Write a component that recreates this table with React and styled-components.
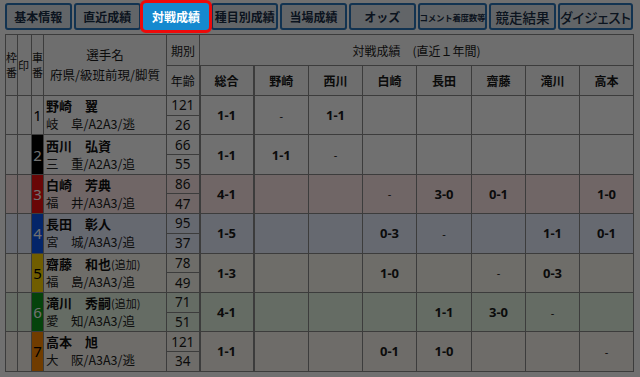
import React from 'react'
import styled, { createGlobalStyle } from 'styled-components'

const GlobalStyle = createGlobalStyle`
    html, body {
        margin: 0;
        padding: 0;
        background: #fff;
    }
    body {
        font-family: 'Noto Sans CJK JP', 'Noto Sans', sans-serif;
        color: #111;
    }
`

const tabs = [
    { label: '基本情報' },
    { label: '直近成績' },
    { label: '対戦成績', active: true },
    { label: '種目別成績' },
    { label: '当場成績' },
    { label: 'オッズ' },
    { label: 'コメント着度数等', size: 'small' },
    { label: '競走結果', size: 'large' },
    { label: 'ダイジェスト', size: 'large' },
]

const opponents = ['野崎', '西川', '白崎', '長田', '齋藤', '滝川', '高本']

const carColors = {
    1: { bg: '#ffffff', fg: '#000' },
    2: { bg: '#000000', fg: '#fff' },
    3: { bg: '#f01010', fg: '#fff' },
    4: { bg: '#0a55f0', fg: '#fff' },
    5: { bg: '#ffd400', fg: '#000' },
    6: { bg: '#0c9a1c', fg: '#fff' },
    7: { bg: '#ff8a00', fg: '#000' },
}

const rowTints = {
    1: '#ffffff',
    2: '#ffffff',
    3: '#ffe9e9',
    4: '#e9eeff',
    5: '#fbf8ee',
    6: '#e6f6e3',
    7: '#fbf6ee',
}

const players = [
    { car: 1, name: '野崎　翼', sub: '岐　阜/A2A3/逃', term: 121, age: 26, total: '1-1', res: ['-', '1-1', '', '', '', '', ''] },
    { car: 2, name: '西川　弘資', sub: '三　重/A2A3/追', term: 66, age: 55, total: '1-1', res: ['1-1', '-', '', '', '', '', ''] },
    { car: 3, name: '白崎　芳典', sub: '福　井/A3A3/追', term: 86, age: 47, total: '4-1', res: ['', '', '-', '3-0', '0-1', '', '1-0'] },
    { car: 4, name: '長田　彰人', sub: '宮　城/A3A3/追', term: 95, age: 37, total: '1-5', res: ['', '', '0-3', '-', '', '1-1', '0-1'] },
    { car: 5, name: '齋藤　和也', extra: '(追加)', sub: '福　島/A3A3/追', term: 78, age: 49, total: '1-3', res: ['', '', '1-0', '', '-', '0-3', ''] },
    { car: 6, name: '滝川　秀嗣', extra: '(追加)', sub: '愛　知/A3A3/追', term: 71, age: 51, total: '4-1', res: ['', '', '', '1-1', '3-0', '-', ''] },
    { car: 7, name: '高本　旭', sub: '大　阪/A3A3/逃', term: 121, age: 34, total: '1-1', res: ['', '', '0-1', '1-0', '', '', '-'] },
]

const colWidths = [12, 14, 12, 123, 33, 54, 55, 54, 54, 55, 54, 54, 54]

const App = () => {
    return (
        <Page>
            <GlobalStyle />
            <TabBar>
                {tabs.map(tab => (
                    <Tab key={tab.label} $active={tab.active} $size={tab.size}>
                        {tab.label}
                    </Tab>
                ))}
            </TabBar>

            <Table>
                <colgroup>
                    {colWidths.map((w, i) => (
                        <col key={i} style={{ width: w }} />
                    ))}
                </colgroup>
                <thead>
                    <HeadRow $h={31}>
                        <StackHead rowSpan={2}>枠<br />番</StackHead>
                        <StackHead rowSpan={2}>印</StackHead>
                        <StackHead rowSpan={2}>車<br />番</StackHead>
                        <NameHead rowSpan={2}>
                            選手名
                            <br />
                            府県/級班前現/脚質
                        </NameHead>
                        <HeadCell>期別</HeadCell>
                        <HeadCell colSpan={8}>対戦成績　(直近１年間)</HeadCell>
                    </HeadRow>
                    <HeadRow $h={30}>
                        <HeadCell>年齢</HeadCell>
                        <HeadCell $bold $thick>総合</HeadCell>
                        {opponents.map(o => (
                            <HeadCell key={o} $bold>{o}</HeadCell>
                        ))}
                    </HeadRow>
                </thead>
                <tbody>
                    {players.map(p => (
                        <React.Fragment key={p.car}>
                            <DataRow $tint={rowTints[p.car]}>
                                <Cell rowSpan={2} />
                                <Cell rowSpan={2} />
                                <CarCell rowSpan={2} $bg={carColors[p.car].bg} $fg={carColors[p.car].fg}>
                                    {p.car}
                                </CarCell>
                                <NameCell rowSpan={2}>
                                    <PlayerName>
                                        {p.name}
                                        {p.extra && <Extra>{p.extra}</Extra>}
                                    </PlayerName>
                                    <PlayerSub>{p.sub}</PlayerSub>
                                </NameCell>
                                <NumCell>{p.term}</NumCell>
                                <ResultCell rowSpan={2} $thick>{p.total}</ResultCell>
                                {p.res.map((r, i) => (
                                    <ResultCell key={i} rowSpan={2} $dash={r === '-'}>
                                        {r}
                                    </ResultCell>
                                ))}
                            </DataRow>
                            <DataRow $tint={rowTints[p.car]}>
                                <NumCell>{p.age}</NumCell>
                            </DataRow>
                        </React.Fragment>
                    ))}
                </tbody>
            </Table>

            <Dimmer />
        </Page>
    )
}

const Page = styled.div`
    padding: 3px 7px 0 5px;
    width: 628px;
`

const TabBar = styled.nav`
    display: grid;
    grid-template-columns: repeat(9, 1fr);
    gap: 2px;
    height: 27px;
`

const Tab = styled.div`
    position: relative;
    z-index: ${p => (p.$active ? 20 : 'auto')};
    display: flex;
    align-items: center;
    justify-content: center;
    white-space: nowrap;
    border: 2px solid ${p => (p.$active ? '#1589cf' : '#2a74b8')};
    border-radius: 3px;
    background: ${p => (p.$active ? '#1589cf' : '#dfe7ec')};
    color: ${p => (p.$active ? '#fff' : '#1b2f48')};
    outline: ${p => (p.$active ? '3px solid #ee0a0a' : 'none')};
    font-weight: ${p => (p.$size === 'large' ? 500 : 700)};
    font-size: ${p => (p.$size === 'small' ? '8.5px' : p.$size === 'large' ? '13.5px' : '12px')};
    font-feature-settings: ${p => (p.$size === 'large' ? "'palt'" : 'normal')};
    letter-spacing: ${p => (p.$size === 'small' ? '-0.3px' : '0')};
    box-sizing: border-box;
`

const Table = styled.table`
    margin-top: 4px;
    width: 628px;
    table-layout: fixed;
    border-collapse: collapse;
    border: 1px solid #8a8a8a;
    font-size: 12px;
`

const HeadRow = styled.tr`
    height: ${p => p.$h}px;
    background: #fafafa;
`

const HeadCell = styled.th`
    padding: 0;
    border: 1px solid #8a8a8a;
    border-left-width: ${p => (p.$thick ? '2px' : '1px')};
    border-right-width: ${p => (p.$thick ? '2px' : '1px')};
    font-weight: ${p => (p.$bold ? 700 : 400)};
    font-size: 12px;
    color: #1a1a1a;
    text-align: center;
    white-space: nowrap;
`

const StackHead = styled(HeadCell)`
    font-size: 11px;
    line-height: 15px;
    text-align: left;
`

const NameHead = styled(HeadCell)`
    font-size: 12.5px;
    line-height: 20px;
`

const DataRow = styled.tr`
    background: ${p => p.$tint};
`

const Cell = styled.td`
    padding: 0;
    border: 1px solid #8a8a8a;
`

const CarCell = styled(Cell)`
    background: ${p => p.$bg};
    color: ${p => p.$fg};
    text-align: center;
    font-family: 'Noto Sans', sans-serif;
    font-size: 15px;
`

const NameCell = styled(Cell)`
    padding-left: 2px;
    white-space: nowrap;
`

const PlayerName = styled.div`
    font-weight: 700;
    font-size: 13px;
    line-height: 18px;
`

const Extra = styled.span`
    font-weight: 400;
    font-size: 11px;
    color: #222;
`

const PlayerSub = styled.div`
    font-size: 12.5px;
    line-height: 18px;
    color: #222;
`

const NumCell = styled(Cell)`
    height: 18.7px;
    text-align: center;
    font-family: 'Noto Sans', sans-serif;
    font-size: 13.5px;
    color: #1a1a1a;
`

const ResultCell = styled(Cell)`
    border-left-width: ${p => (p.$thick ? '2px' : '1px')};
    border-right-width: ${p => (p.$thick ? '2px' : '1px')};
    text-align: center;
    font-family: 'Noto Sans', sans-serif;
    font-weight: ${p => (p.$dash ? 400 : 700)};
    font-size: ${p => (p.$dash ? '11px' : '13px')};
    color: #1a1a1a;
`

const Dimmer = styled.div`
    position: fixed;
    inset: 0;
    z-index: 10;
    background: rgba(0, 0, 0, 0.56);
`

export default App
